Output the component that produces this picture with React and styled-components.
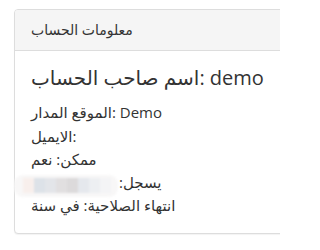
import React from "react";
import styled, { createGlobalStyle } from "styled-components";

const Global = createGlobalStyle`
  html, body { margin: 0; padding: 0; background: #fff; overflow: hidden; }
  body {
    font-family: "Open Sans", "DejaVu Sans", sans-serif;
    color: #333;
  }
`;

const Page = styled.div`
  width: 280px;
  height: 250px;
  overflow: hidden;
  padding: 9px 0 0 14px;
  box-sizing: border-box;
`;

const Panel = styled.section`
  width: 300px;
  border: 1px solid #ddd;
  border-radius: 4px;
  background: #fff;
  box-shadow: 0 1px 1px rgba(0, 0, 0, 0.05);
`;

const Heading = styled.header`
  background: #f5f5f5;
  border-bottom: 1px solid #ddd;
  border-radius: 3px 3px 0 0;
  padding: 10px 16px;
  font-size: 14px;
  line-height: 20px;
  color: #333;
`;

const Body = styled.div`
  padding: 14px 16px 16px;
  display: flex;
  flex-direction: column;
`;

const Row = styled.div`
  font-size: ${(p) => p.$size || 15}px;
  line-height: ${(p) => p.$lh || 23}px;
  height: ${(p) => p.$lh || 23}px;
  margin-top: ${(p) => p.$mt || 0}px;
  white-space: nowrap;
  direction: ltr;
`;

const FlexRow = styled(Row)`
  display: flex;
  align-items: center;
`;

const Redacted = styled.span`
  display: inline-flex;
  align-items: center;
  box-sizing: border-box;
  width: 104px;
  height: 22px;
  margin-left: -17px;
  margin-right: 1px;
  margin-top: 6px;
  padding-left: 9px;
  border-radius: 9px;
  background: #f8f7f7;
  filter: blur(1.1px);
  overflow: hidden;
`;

const Pixel = styled.span`
  flex: none;
  width: 11px;
  height: 15px;
  background: ${(p) => p.$c};
`;

const Label = styled.span`
  direction: rtl;
  unicode-bidi: isolate;
`;

const pixels = ["#f8efec", "#dde2e8", "#e3e5e9", "#e1dfe0", "#dcdadb", "#e5e8ed", "#edeff2", "#f4f4f6"];

export default function App() {
  return (
    <>
      <Global />
      <Page>
        <Panel>
          <Heading>معلومات الحساب</Heading>
          <Body>
            <Row $size={20} $lh={26}>اسم صاحب الحساب: demo</Row>
            <Row $mt={9} $lh={25}>الموقع المدار: Demo</Row>
            <Row>الايميل:</Row>
            <Row>ممكن: نعم</Row>
            <FlexRow>
              <Redacted>
                {pixels.map((c, i) => (
                  <Pixel key={i} $c={c} />
                ))}
              </Redacted>
              <Label>يسجل:</Label>
            </FlexRow>
            <Row>انتهاء الصلاحية: في سنة</Row>
          </Body>
        </Panel>
      </Page>
    </>
  );
}
